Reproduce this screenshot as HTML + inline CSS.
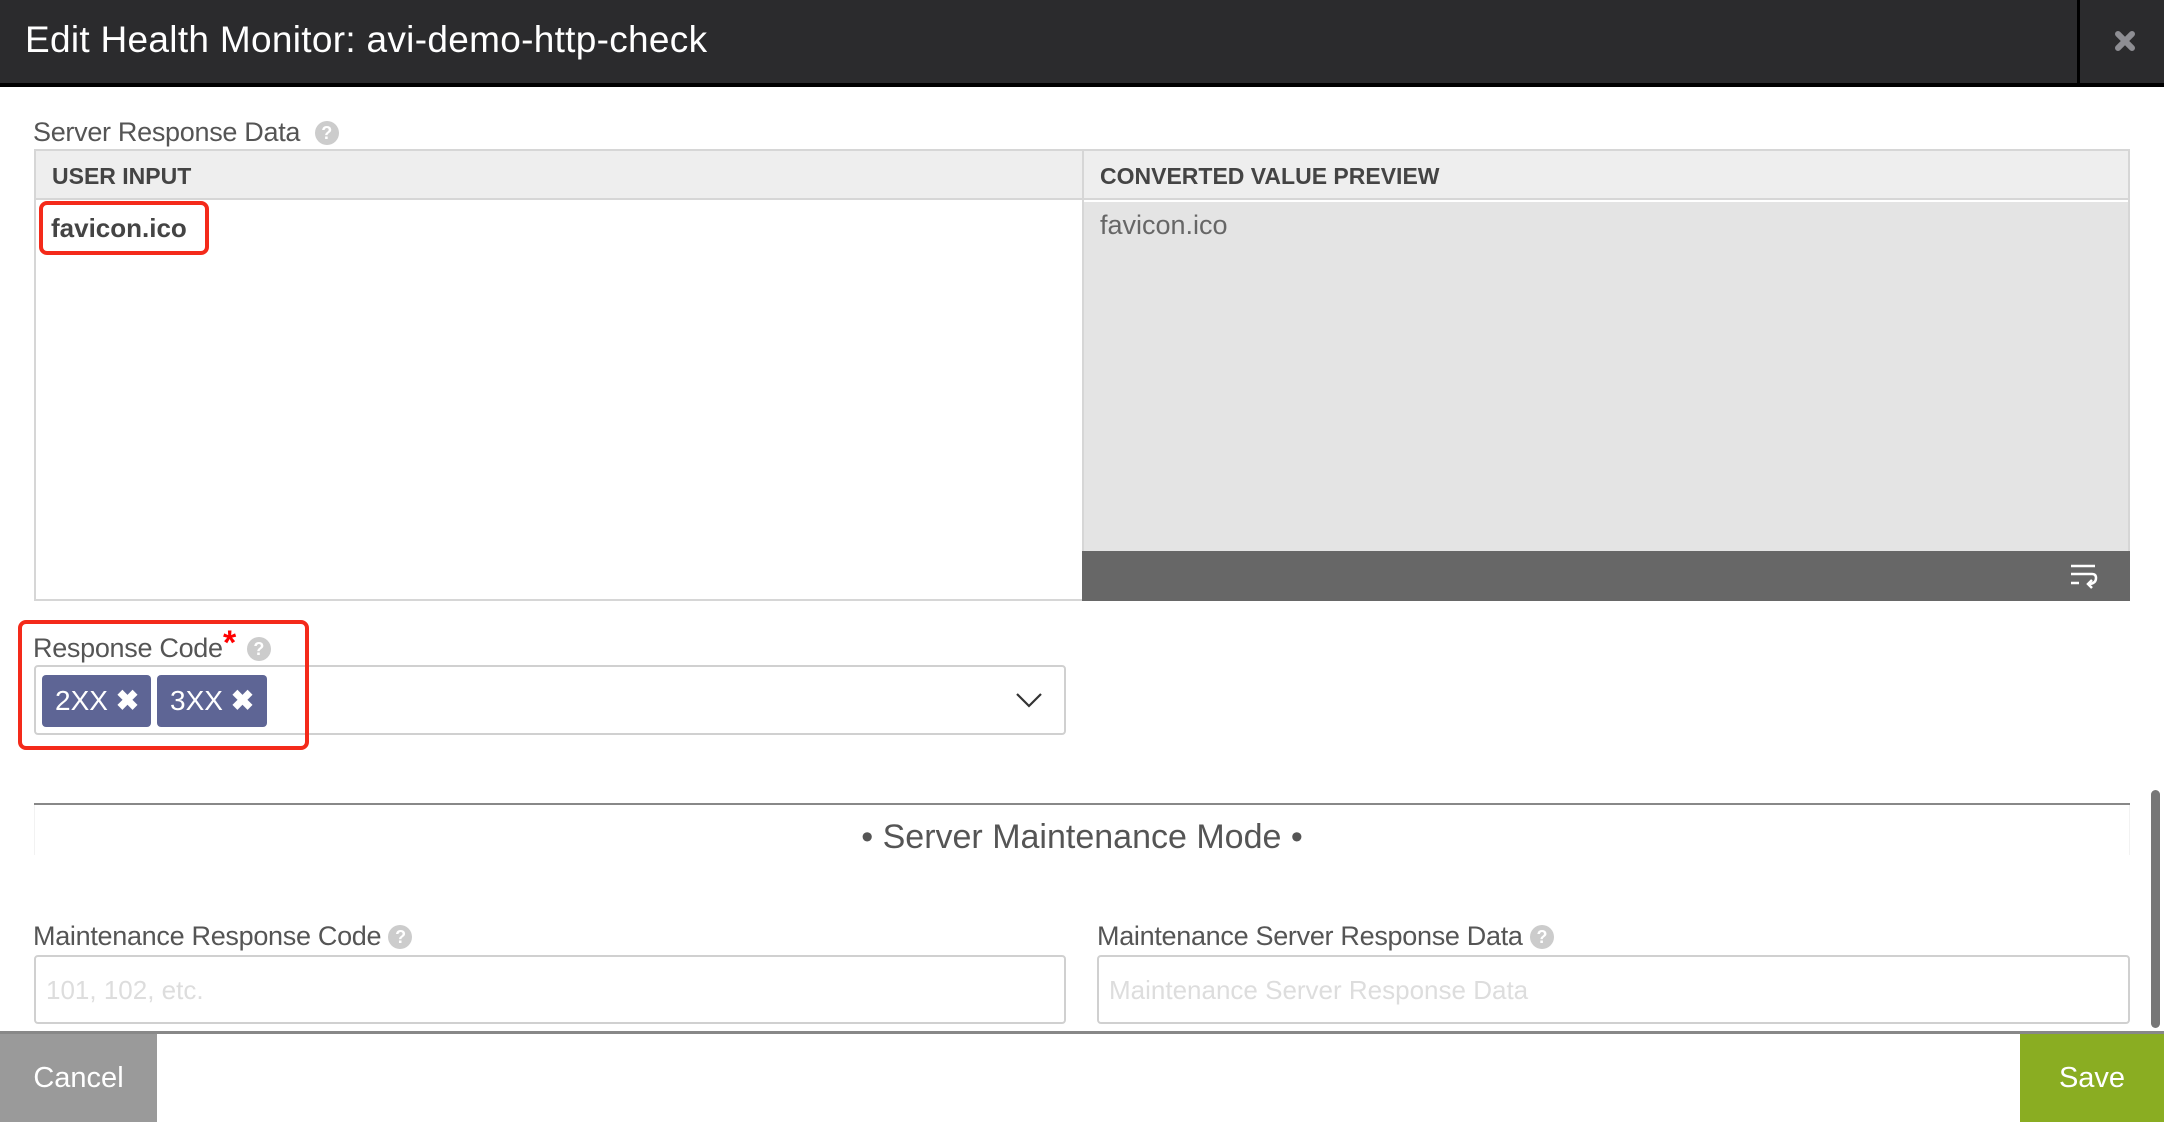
<!DOCTYPE html>
<html><head><meta charset="utf-8"><style>
*{box-sizing:border-box;margin:0;padding:0}
body{width:2164px;height:1122px;overflow:hidden;background:#fff;font-family:"Liberation Sans",sans-serif;position:relative;color:#555}
.a{position:absolute}
.q{display:inline-block;width:24px;height:24px;border-radius:50%;background:#ccc;color:#fff;font-size:18px;font-weight:bold;text-align:center;line-height:24px;vertical-align:2px}
.lbl{font-size:27px;color:#555;letter-spacing:-0.3px;line-height:32px;white-space:nowrap}
.inp{border:2px solid #d0d0d0;border-radius:4px;background:#fff}
.tag{background:#5e6595;color:#fff;border-radius:4px;font-size:28px;height:52px;line-height:52px;padding-left:13px}
</style></head><body>
<div class="a" style="left:0;top:0;width:2164px;height:83px;background:#2b2b2d"></div>
<div class="a" style="left:0;top:83px;width:2164px;height:4px;background:#000"></div>
<div class="a" style="left:2077px;top:0;width:3px;height:83px;background:#000"></div>
<div class="a" style="left:25px;top:19px;font-size:37px;color:#fff;letter-spacing:0.3px">Edit Health Monitor: avi-demo-http-check</div>
<svg class="a" style="left:2114px;top:30px" width="22" height="22" viewBox="0 0 22 22"><path d="M4 4L18 18M18 4L4 18" stroke="#8e8e93" stroke-width="6" stroke-linecap="round"/></svg>

<div class="a lbl" style="left:33px;top:116px">Server Response Data &nbsp;<span class="q">?</span></div>
<div class="a" style="left:34px;top:149px;width:2096px;height:452px;border:2px solid #d6d6d6;background:#fff"></div>
<div class="a" style="left:36px;top:151px;width:2092px;height:49px;background:#eeeeee;border-bottom:2px solid #d6d6d6"></div>
<div class="a" style="left:1082px;top:151px;width:2px;height:400px;background:#d6d6d6"></div>
<div class="a" style="left:1084px;top:202px;width:1044px;height:349px;background:#e4e4e4"></div>
<div class="a" style="left:1082px;top:551px;width:1048px;height:50px;background:#676767"></div>
<svg class="a" style="left:2069px;top:563px" width="30" height="26" viewBox="0 0 30 26"><path d="M2 3H26M2 11H23Q27 11 27 15Q27 20 21 21M2 20H10" stroke="#fff" stroke-width="2.5" fill="none"/><path d="M23 17L19 21L23 25" stroke="#fff" stroke-width="2.5" fill="none"/></svg>
<div class="a" style="left:52px;top:163px;font-size:23px;font-weight:bold;color:#444">USER INPUT</div>
<div class="a" style="left:1100px;top:163px;font-size:23px;font-weight:bold;color:#444">CONVERTED VALUE PREVIEW</div>
<div class="a" style="left:51px;top:213px;font-size:26px;font-weight:bold;color:#444">favicon.ico</div>
<div class="a" style="left:1100px;top:210px;font-size:27px;color:#666">favicon.ico</div>
<div class="a" style="left:39px;top:201px;width:170px;height:54px;border:4px solid #f42a1a;border-radius:8px"></div>

<div class="a lbl" style="left:33px;top:632px">Response Code<span style="display:inline-block;width:24px"></span><span class="q">?</span></div>
<div class="a" style="left:223px;top:626px;color:#f00;font-weight:bold;font-size:34px;line-height:34px">*</div>
<div class="a inp" style="left:34px;top:665px;width:1032px;height:70px"></div>
<div class="a tag" style="left:42px;top:675px;width:109px">2XX <span style="font-weight:bold">✖</span></div>
<div class="a tag" style="left:157px;top:675px;width:110px">3XX <span style="font-weight:bold">✖</span></div>
<svg class="a" style="left:1016px;top:692px" width="26" height="16" viewBox="0 0 26 16"><path d="M1 2L13 14L25 2" stroke="#333" stroke-width="2.2" fill="none"/></svg>
<div class="a" style="left:18px;top:620px;width:291px;height:130px;border:4px solid #f42a1a;border-radius:8px"></div>

<div class="a" style="left:34px;top:803px;width:2096px;height:2px;background:#888"></div>
<div class="a" style="left:34px;top:805px;width:2096px;height:50px;border-left:1px solid #f2f2f2;border-right:1px solid #f2f2f2"></div>
<div class="a" style="left:0;top:818px;width:2164px;text-align:center;font-size:34px;color:#555">• Server Maintenance Mode •</div>

<div class="a lbl" style="left:33px;top:920px">Maintenance Response Code <span class="q">?</span></div>
<div class="a lbl" style="left:1097px;top:920px">Maintenance Server Response Data <span class="q">?</span></div>
<div class="a inp" style="left:34px;top:955px;width:1032px;height:69px"></div>
<div class="a inp" style="left:1097px;top:955px;width:1033px;height:69px"></div>
<div class="a" style="left:46px;top:975px;font-size:26px;color:#ddd">101, 102, etc.</div>
<div class="a" style="left:1109px;top:975px;font-size:26px;color:#ddd">Maintenance Server Response Data</div>
<div class="a" style="left:2151px;top:790px;width:9px;height:238px;background:#777;border-radius:5px"></div>

<div class="a" style="left:0;top:1031px;width:2164px;height:3px;background:#888"></div>
<div class="a" style="left:0;top:1034px;width:157px;height:88px;background:#9a9a9a;color:#fff;font-size:29px;line-height:88px;text-align:center">Cancel</div>
<div class="a" style="left:2020px;top:1034px;width:144px;height:88px;background:#8aad22;color:#fff;font-size:29px;line-height:88px;text-align:center">Save</div>
</body></html>
